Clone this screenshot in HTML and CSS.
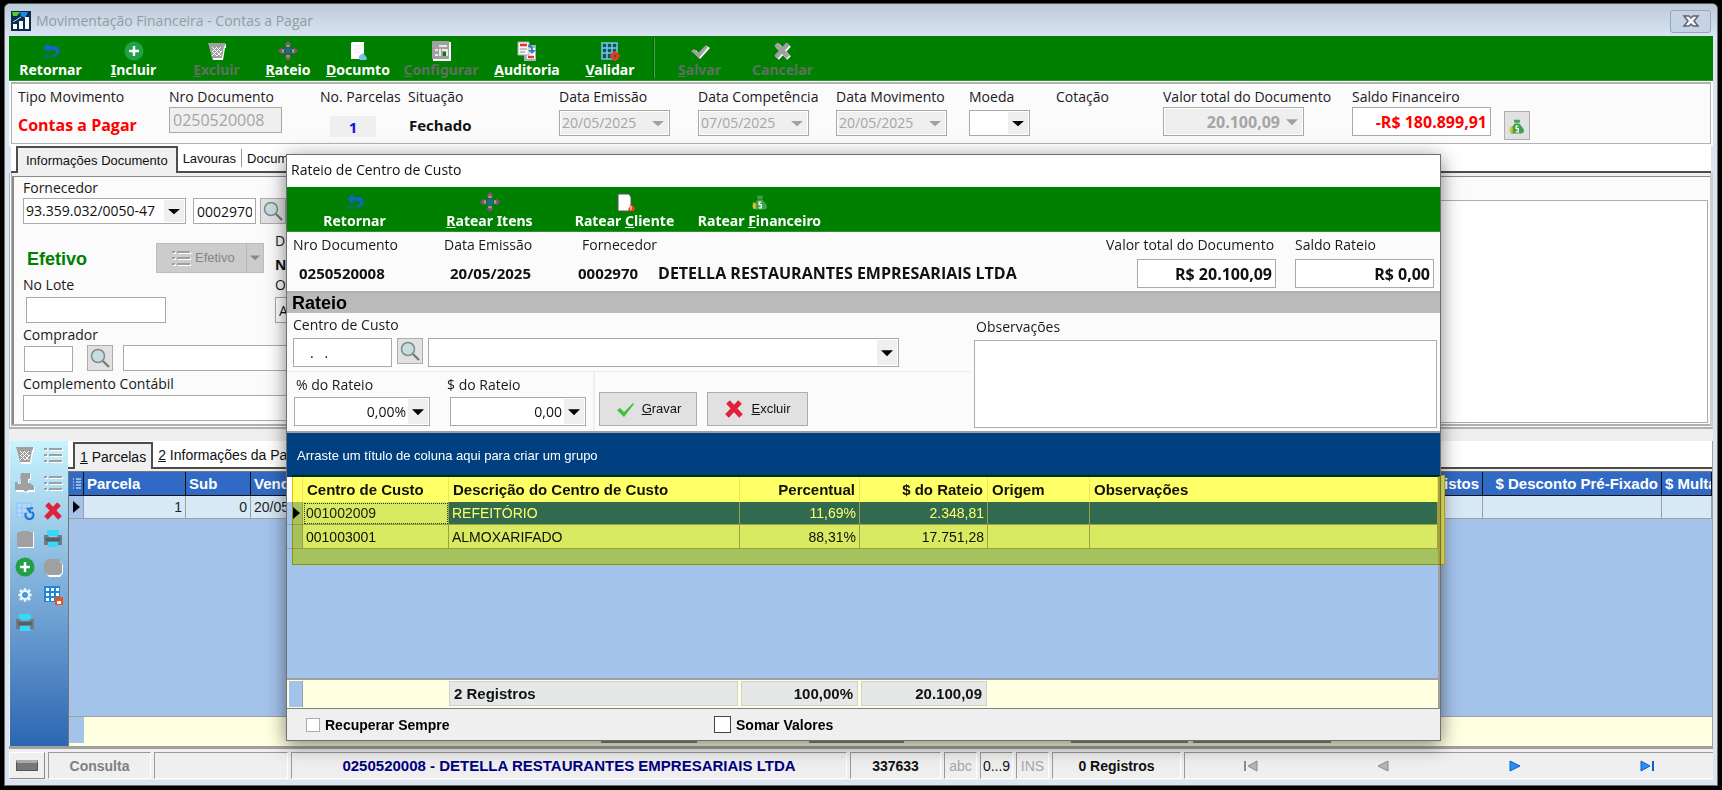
FILE: index.html
```html
<!DOCTYPE html>
<html lang="pt-BR">
<head>
<meta charset="utf-8">
<title>Movimentação Financeira - Contas a Pagar</title>
<link rel="stylesheet" href="styles.css">
</head>
<body>
<svg class="defs" aria-hidden="true">
  <symbol id="i-back" viewBox="0 0 20 20"><path d="M2 7 8 2v3h5a5 5 0 0 1 1 10l-1 1v-3a2 2 0 0 0 0-4H8v3z" fill="#1565c0"/><path d="M3 13v4M6 13v4M9 13v4M12 13v4" stroke="#1565c0" stroke-width="1"/></symbol>
  <symbol id="i-plus" viewBox="0 0 20 20"><circle cx="10" cy="10" r="9.500" fill="#21a045"/><path d="M10 5v10M5 10h10" stroke="#fff" stroke-width="2.500"/></symbol>
  <symbol id="i-trash" viewBox="0 0 20 20"><path d="M2 3h17v4h-1l-2 12H6L3 7z" fill="#fff"/><path d="M1 2h17v3h-1l-2 12H5L2 5z" fill="#a0a0a0"/><path d="M5 6l9 9M9 6l5 5M5 10l5 5M14 6l-9 9M10 6l-5 5M15 10l-5 5" stroke="#fff" stroke-width="1"/></symbol>
  <symbol id="i-move" viewBox="0 0 20 20"><path d="M10 0l3.500 4H11v2H9V4H6.500zM10 20l3.500-4H11v-2H9v2H6.500zM0 10l4-3.500V9h2v2H4v2.500zM20 10l-4-3.500V9h-2v2h2v2.500z" fill="#9c4b86"/><path d="M8 5h4M8 15h4M5 8v4M15 8v4" stroke="#d5c9d2"/><path d="M7.500 7.500h5v5h-5z" fill="#1c7a4a" stroke="#3f51a5" stroke-width="1.500"/></symbol>
  <symbol id="i-doc" viewBox="0 0 20 20"><path d="M4 1h12v13l-3 4H3V2z" fill="#fff"/><path d="M6 5h7M6 8h7M6 11h6" stroke="#e3e6ea"/><path d="M11 18v-3l4-3 4 5-1 2h-6z" fill="#7cc0ec"/></symbol>
  <symbol id="i-doc-red" viewBox="0 0 20 20"><path d="M3 2h11l2 3v14H3z" fill="#fff" stroke="#555"/><path d="M13 18l3-6 4 4-1 3h-5z" fill="#f04020"/><path d="M16 14v4" stroke="#fff"/></symbol>
  <symbol id="i-config" viewBox="0 0 20 20"><path d="M2 1h18v19H2z" fill="#fff"/><path d="M1 0h17v18H1z" fill="#a0a0a0"/><path d="M4 9h3M4 14h3M8 5h8" stroke="#fff" stroke-width="1.500"/><path d="M9 8v7M11 9h5v6" fill="none" stroke="#fff" stroke-width="1.500"/><path d="M12 11h3v4h-3z" fill="#008000"/></symbol>
  <symbol id="i-audit" viewBox="0 0 20 20"><path d="M7 4h12v16H7z" fill="#aab3bd"/><path d="M10 7h8v11h-8z" fill="#fff"/><path d="M1 1h11v13H1z" fill="#f5f5f5" stroke="#b8a8a8"/><path d="M3 4h7M11 16h6" stroke="#e03535" stroke-width="2.500"/><path d="M3 8h7M3 11h5" stroke="#8a9096"/><path d="M11 4c5 0 5 2 5 5h3l-4 4-4-4h3c0-2-1-3-3-3z" fill="#2d82c8"/></symbol>
  <symbol id="i-tablegear" viewBox="0 0 20 20"><path d="M2 2h15v16H2zM7 2v16M12 2v16M2 7h15M2 12h15" fill="#0a5a50" stroke="#7cc4f0" stroke-width="1.500"/><circle cx="15" cy="15" r="2.500" fill="none" stroke="#e03a20" stroke-width="3"/><path d="M15 10v3M15 17v3M10 15h3M17 15h3M12 12l1 1M17 17l1 1M18 12l-1 1M13 17l-1 1" stroke="#e03a20" stroke-width="2"/></symbol>
  <symbol id="i-check-off" viewBox="0 0 20 20"><path d="M3 11l3-2 3 4 8-8 3 2L10 18z" fill="#fff"/><path d="M1 10l3-2 4 4 8-8 2 2L9 17z" fill="#a0a0a0"/></symbol>
  <symbol id="i-x-off" viewBox="0 0 20 20"><path d="M4 4l12 13M16 4L4 17" stroke="#fff" stroke-width="5"/><path d="M3 3l12 13M15 3L3 16" stroke="#a0a0a0" stroke-width="4.500"/></symbol>
  <symbol id="i-bag" viewBox="-2 -2 24 24"><path d="M6 2l2 1 2-1 2 1 2-1-1 4H7zM7 7h6l5 7c1 3 0 5-3 5H5c-3 0-4-2-2-6z" fill="#45a049"/><path d="M2 10l3 2v6H2l-1-3z" fill="#d8c22c"/><path d="M11.500 10H9v3h2.500v4H8.500" fill="none" stroke="#fff" stroke-width="1.500"/></symbol>
  <symbol id="i-search" viewBox="0 0 20 20"><circle cx="8" cy="8" r="6.500" fill="#c9dde0" stroke="#7d8b8e" stroke-width="1.500"/><path d="M13 13l6 6" stroke="#777" stroke-width="2.200"/></symbol>
  <symbol id="i-list" viewBox="0 0 20 20"><path d="M2 5h3M7 5h13M2 11h3M7 11h13M2 17h3M7 17h13" stroke="#fff" stroke-width="2"/><path d="M1 4h3M6 4h13M1 10h3M6 10h13M1 16h3M6 16h13" stroke="#a0a0a0" stroke-width="2"/></symbol>
  <symbol id="i-check" viewBox="0 0 20 20"><path d="M2 11l3-2 4 4 9-9 1 1L9 18z" fill="#3ec23a"/></symbol>
  <symbol id="i-x" viewBox="0 0 20 20"><path d="M4 3l13 14M16 3L3 17" stroke="#e0213a" stroke-width="5"/></symbol>
  <symbol id="i-valve" viewBox="0 0 20 20"><path d="M7 1h9v6h-2v4h2l4 3v5h-6l-2 1-3-1H1V9h3v3h3V7H6z" fill="#fff"/><path d="M6 0h9v6h-2v4h2l4 3v4h-6l-2 2-3-2H0V9h3v2h3V6H5z" fill="#a0a0a0"/></symbol>
  <symbol id="i-tablerefresh" viewBox="0 0 20 20"><path d="M2 2h14v14H2zM7 2v14M12 2v14M2 7h14M2 12h14" fill="#b7d9fb" stroke="#8cc0f5"/><path d="M11 12a4 4 0 1 0 6-1M18 7l-5 1 3 4" fill="none" stroke="#1b76d2" stroke-width="2.200"/></symbol>
  <symbol id="i-square" viewBox="0 0 20 20"><path d="M3 3h16v16H3z" fill="#fff"/><path d="M2 3h4V2h8v1h4v15H2z" fill="#a0a0a0"/></symbol>
  <symbol id="i-printer" viewBox="0 0 20 20"><path d="M4 1h12v6H4z" fill="#38d7f5"/><path d="M1 6h4l1 2h8l1-2h4v10H1z" fill="#6f7c86"/><path d="M3 9h14v3H3z" fill="#53606a"/><path d="M5 13h10v5H5z" fill="#38d7f5"/></symbol>
  <symbol id="i-stack" viewBox="0 0 20 20"><path d="M6 4h11l3 4v8l-3 4H6l-4-5V7z" fill="#fff"/><path d="M5 2h10l4 5v9l-3 2H5l-4-3V6z" fill="#a0a0a0"/></symbol>
  <symbol id="i-gear" viewBox="-2 -2 24 24"><path d="M10 2v16M2 10h16M4 4l12 12M16 4L4 16" stroke="#e9f6ff" stroke-width="3"/><circle cx="10" cy="10" r="6" fill="#e9f6ff"/><circle cx="10" cy="10" r="3" fill="#4aa0e0" stroke="#2c7cc0"/></symbol>
  <symbol id="i-tablesave" viewBox="0 0 20 20"><path d="M1 1h16v16H1z" fill="#1e88d8"/><path d="M3 3h3v3H3zM8 3h3v3H8zM13 3h3v3h-3zM3 8h3v3H3zM8 8h3v3H8zM13 8h3v3h-3zM3 13h3v3H3zM8 13h3v3H8z" fill="#fff"/><path d="M12 12h8v8h-8z" fill="#f0501e"/><path d="M14 16h4v3h-4z" fill="#fff"/></symbol>
  <symbol id="i-logo" viewBox="0 0 20 20"><path d="M0 0h20v20H0z" fill="#0b2c4e"/><path d="M1 1h8l-3 4H2z" fill="#4bd02c"/><path d="M9 1h8l-3 6-4-2z" fill="#1a8be0"/><path d="M2 18h4v-5H2zM8 18h4v-8H8zM14 18h4V6h-4z" fill="#fff"/><path d="M2 11l8-5" stroke="#bfe0f5"/></symbol>
  <symbol id="i-close" viewBox="0 0 20 20"><path d="M3 5h5l2 2 2-2h5l-4 5 4 5h-5l-2-2-2 2H3l4-5z" fill="#f4f6f8" stroke="#5b6474" stroke-width="1.500"/></symbol>
  <symbol id="i-first" viewBox="0 0 20 20"><path d="M4 5v10" stroke="#8d8d8d" stroke-width="2"/><path d="M16 5v10L7 10z" fill="#b5b5b5" stroke="#8d8d8d"/></symbol>
  <symbol id="i-prev" viewBox="0 0 20 20"><path d="M15 5v10L5 10z" fill="#b5b5b5" stroke="#8d8d8d"/></symbol>
  <symbol id="i-next" viewBox="0 0 20 20"><path d="M5 5v10l10-5z" fill="#2b8df5" stroke="#0a62c8"/></symbol>
  <symbol id="i-last" viewBox="0 0 20 20"><path d="M4 5v10l9-5z" fill="#2b8df5" stroke="#0a62c8"/><path d="M16 5v10" stroke="#0a62c8" stroke-width="2"/></symbol>
</svg>

<main class="window">
  <header class="titlebar">
    <svg class="icon"><use href="#i-logo"/></svg>
    <h1 class="titlebar-text">Movimentação Financeira - Contas a Pagar</h1>
    <button class="close" aria-label="Fechar"><svg class="icon"><use href="#i-close"/></svg></button>
  </header>

  <nav class="toolbar">
    <button class="tool w-m"><svg class="icon"><use href="#i-back"/></svg><span>Retornar</span></button>
    <button class="tool w-m"><svg class="icon"><use href="#i-plus"/></svg><span><u>I</u>ncluir</span></button>
    <button class="tool w-m" disabled><svg class="icon"><use href="#i-trash"/></svg><span><u>E</u>xcluir</span></button>
    <button class="tool w-s"><svg class="icon"><use href="#i-move"/></svg><span><u>R</u>ateio</span></button>
    <button class="tool w-n"><svg class="icon"><use href="#i-doc"/></svg><span><u>D</u>ocumto</span></button>
    <button class="tool w-l" disabled><svg class="icon"><use href="#i-config"/></svg><span><u>C</u>onfigurar</span></button>
    <button class="tool w-l"><svg class="icon"><use href="#i-audit"/></svg><span><u>A</u>uditoria</span></button>
    <button class="tool w-n"><svg class="icon"><use href="#i-tablegear"/></svg><span><u>V</u>alidar</span></button>
    <i class="tool-sep"></i>
    <button class="tool w-m" disabled><svg class="icon"><use href="#i-check-off"/></svg><span><u>S</u>alvar</span></button>
    <button class="tool w-m" disabled><svg class="icon"><use href="#i-x-off"/></svg><span>Cancelar</span></button>
  </nav>

  <section class="summary">
    <div class="col"><span class="lbl">Tipo Movimento</span><strong class="strong red">Contas a Pagar</strong></div>
    <div class="col"><label class="lbl" for="nro">Nro Documento</label><input class="box off doc-no" id="nro" value="0250520008" disabled></div>
    <div class="col"><span class="lbl">No. Parcelas</span><output class="count">1</output></div>
    <div class="col"><span class="lbl">Situação</span><strong class="strong">Fechado</strong></div>
    <div class="col"><label class="lbl" for="de">Data Emissão</label><span class="combo off date"><select id="de" disabled><option>20/05/2025</option></select></span></div>
    <div class="col"><label class="lbl" for="dc">Data Competência</label><span class="combo off date"><select id="dc" disabled><option>07/05/2025</option></select></span></div>
    <div class="col"><label class="lbl" for="dm">Data Movimento</label><span class="combo off date"><select id="dm" disabled><option>20/05/2025</option></select></span></div>
    <div class="col"><label class="lbl" for="moeda">Moeda</label><span class="combo coin"><select id="moeda"><option></option></select></span></div>
    <div class="col"><span class="lbl">Cotação</span></div>
    <div class="col"><label class="lbl" for="vt">Valor total do Documento</label><span class="combo off total"><select id="vt" disabled><option>20.100,09</option></select></span></div>
    <div class="col"><label class="lbl" for="sf">Saldo Financeiro</label><input class="box money red" id="sf" value="-R$ 180.899,91"></div>
    <div class="col col-bag"><button class="sq" aria-label="Financeiro"><svg class="icon"><use href="#i-bag"/></svg></button></div>
  </section>

  <nav class="tabs tabs-top">
    <button class="tab on">Informações Documento</button><button class="tab">Lavouras</button><i class="tab-sep"></i><button class="tab">Docum</button>
  </nav>

  <section class="docform">
    <div class="supplier">
      <label class="lbl" for="cnpj">Fornecedor</label>
      <div class="row supplier-id">
        <span class="combo cnpj"><select id="cnpj"><option>93.359.032/0050-47</option></select></span>
        <input class="box code" aria-label="Código do fornecedor" value="0002970">
        <button class="sq" aria-label="Buscar fornecedor"><svg class="icon"><use href="#i-search"/></svg></button>
      </div>
      <div class="row status-row">
        <strong class="efetivo">Efetivo</strong>
        <button class="split" disabled><svg class="icon"><use href="#i-list"/></svg><span>Efetivo</span><i class="split-arrow"></i></button>
        <div class="kind"><span class="lbl">D</span><strong>N</strong></div>
      </div>
      <div class="row lot">
        <div class="lot-col"><label class="lbl" for="lote">No Lote</label><input class="box lote" id="lote"></div>
        <div class="lot-org"><label class="lbl" for="org">O</label><input class="box" id="org" value="A"></div>
      </div>
      <label class="lbl lbl-buyer" for="comp">Comprador</label>
      <div class="row buyer">
        <input class="box buyer-code" id="comp">
        <button class="sq" aria-label="Buscar comprador"><svg class="icon"><use href="#i-search"/></svg></button>
        <input class="box grow" aria-label="Nome do comprador">
      </div>
      <label class="lbl lbl-note" for="cc">Complemento Contábil</label>
      <input class="box wide" id="cc">
    </div>
    <textarea class="memo" aria-label="Histórico"></textarea>
  </section>

  <section class="lower">
    <nav class="side">
      <button aria-label="Lixeira"><svg class="icon"><use href="#i-trash"/></svg></button>
      <button aria-label="Lista"><svg class="icon"><use href="#i-list"/></svg></button>
      <button aria-label="Baixa"><svg class="icon"><use href="#i-valve"/></svg></button>
      <button aria-label="Itens"><svg class="icon"><use href="#i-list"/></svg></button>
      <button aria-label="Atualizar"><svg class="icon"><use href="#i-tablerefresh"/></svg></button>
      <button aria-label="Remover"><svg class="icon"><use href="#i-x"/></svg></button>
      <button aria-label="Anexo"><svg class="icon"><use href="#i-square"/></svg></button>
      <button aria-label="Imprimir"><svg class="icon"><use href="#i-printer"/></svg></button>
      <button aria-label="Adicionar"><svg class="icon"><use href="#i-plus"/></svg></button>
      <button aria-label="Moedas"><svg class="icon"><use href="#i-stack"/></svg></button>
      <button aria-label="Opções"><svg class="icon"><use href="#i-gear"/></svg></button>
      <button aria-label="Salvar grade"><svg class="icon"><use href="#i-tablesave"/></svg></button>
      <button aria-label="Imprimir grade"><svg class="icon"><use href="#i-printer"/></svg></button>
    </nav>
    <div class="parcels">
      <nav class="tabs">
        <button class="tab on"><u>1</u> Parcelas</button><button class="tab"><u>2</u> Informações da Parc</button>
      </nav>
      <div class="pgrid">
        <table class="ptable">
          <colgroup><col class="p-ind"><col class="p-parc"><col class="p-sub"><col class="p-venc"><col><col class="p-desc"><col class="p-multa"></colgroup>
          <thead><tr><th><svg class="mini" viewBox="0 0 10 12"><path d="M1 1h1M4 1h5M1 4h1M4 4h5M1 7h1M4 7h5M1 10h1M4 10h5" stroke="#fff"/></svg></th><th>Parcela</th><th>Sub</th><th>Venc</th><th class="r">Previstos</th><th class="r">$ Desconto Pré-Fixado</th><th>$ Multa</th></tr></thead>
          <tbody><tr><td class="ind"><i class="caret"></i></td><td class="r">1</td><td class="r">0</td><td>20/05</td><td></td><td></td><td></td></tr></tbody>
        </table>
        <div class="pfoot"><i class="pfoot-ind"></i><i class="sum s1"></i><i class="sum s2"></i><i class="sum s3"></i><i class="sum s4"></i></div>
      </div>
    </div>
  </section>

  <footer class="statusbar">
    <div class="st st-key"><i class="key"></i></div>
    <div class="st st-mode">Consulta</div>
    <div class="st st-blank"></div>
    <div class="st st-name">0250520008 - DETELLA RESTAURANTES EMPRESARIAIS LTDA</div>
    <div class="st st-id">337633</div>
    <div class="st st-s dim">abc</div>
    <div class="st st-s plain">0...9</div>
    <div class="st st-s dim">INS</div>
    <div class="st st-reg">0 Registros</div>
    <div class="st st-nav">
      <button aria-label="Primeiro"><svg class="icon"><use href="#i-first"/></svg></button>
      <button aria-label="Anterior"><svg class="icon"><use href="#i-prev"/></svg></button>
      <button aria-label="Próximo"><svg class="icon"><use href="#i-next"/></svg></button>
      <button aria-label="Último"><svg class="icon"><use href="#i-last"/></svg></button>
    </div>
  </footer>
</main>

<section class="dialog" role="dialog" aria-label="Rateio de Centro de Custo">
  <h2 class="dialog-title">Rateio de Centro de Custo</h2>
  <nav class="toolbar">
    <button class="tool w-d"><svg class="icon"><use href="#i-back"/></svg><span>Retornar</span></button>
    <button class="tool w-d"><svg class="icon"><use href="#i-move"/></svg><span><u>R</u>atear Itens</span></button>
    <button class="tool w-d"><svg class="icon"><use href="#i-doc-red"/></svg><span>Ratear <u>C</u>liente</span></button>
    <button class="tool w-d"><svg class="icon"><use href="#i-bag"/></svg><span>Ratear <u>F</u>inanceiro</span></button>
  </nav>
  <div class="dinfo">
    <div class="d-nro"><span class="lbl">Nro Documento</span><strong>0250520008</strong></div>
    <div class="d-data"><span class="lbl">Data Emissão</span><strong>20/05/2025</strong></div>
    <div class="d-forn"><span class="lbl">Fornecedor</span><div class="d-names"><strong>0002970</strong><strong>DETELLA RESTAURANTES EMPRESARIAIS LTDA</strong></div></div>
    <div class="d-val"><label class="lbl" for="dv">Valor total do Documento</label><input class="box money" id="dv" value="R$ 20.100,09"></div>
    <div class="d-sal"><label class="lbl" for="ds">Saldo Rateio</label><input class="box money" id="ds" value="R$ 0,00"></div>
  </div>
  <h3 class="bar">Rateio</h3>
  <div class="dform">
    <div class="dleft">
      <div class="centro">
        <label class="lbl" for="cec">Centro de Custo</label>
        <div class="row">
          <input class="box cec" id="cec" value="   .   .">
          <button class="sq" aria-label="Buscar centro de custo"><svg class="icon"><use href="#i-search"/></svg></button>
          <span class="combo cname"><select aria-label="Descrição do centro de custo"><option></option></select></span>
        </div>
      </div>
      <div class="split-row">
        <div class="amounts">
          <div><label class="lbl" for="pr">% do Rateio</label><span class="combo amt"><select id="pr"><option>0,00%</option></select></span></div>
          <div><label class="lbl" for="vr">$ do Rateio</label><span class="combo amt"><select id="vr"><option>0,00</option></select></span></div>
        </div>
        <button class="btn btn-a"><svg class="icon"><use href="#i-check"/></svg><span><u>G</u>ravar</span></button>
        <button class="btn btn-b"><svg class="icon"><use href="#i-x"/></svg><span><u>E</u>xcluir</span></button>
      </div>
    </div>
    <div class="dright">
      <label class="lbl" for="obs">Observações</label>
      <textarea class="obs" id="obs"></textarea>
    </div>
  </div>
  <div class="group-hint">Arraste um título de coluna aqui para criar um grupo</div>
  <div class="cgrid">
    <table class="ctable">
      <colgroup><col class="c-ind"><col class="c-cod"><col class="c-desc"><col class="c-pct"><col class="c-val"><col class="c-ori"><col></colgroup>
      <thead><tr><th></th><th>Centro de Custo</th><th>Descrição do Centro de Custo</th><th class="r">Percentual</th><th class="r">$ do Rateio</th><th>Origem</th><th>Observações</th></tr></thead>
      <tbody>
        <tr class="sel"><td class="ind"><i class="caret"></i></td><td class="focus">001002009</td><td>REFEITÓRIO</td><td class="r">11,69%</td><td class="r">2.348,81</td><td></td><td></td></tr>
        <tr><td class="ind"></td><td>001003001</td><td>ALMOXARIFADO</td><td class="r">88,31%</td><td class="r">17.751,28</td><td></td><td></td></tr>
      </tbody>
    </table>
    <div class="marker"></div>
  </div>
  <div class="cfoot"><i class="cf-ind"></i><span class="cf cf-n">2 Registros</span><span class="cf cf-p">100,00%</span><span class="cf cf-v">20.100,09</span></div>
  <div class="checks">
    <label class="chk"><input type="checkbox">Recuperar Sempre</label>
    <label class="chk chk-big"><input type="checkbox">Somar Valores</label>
  </div>
</section>
</body>
</html>
```
FILE: styles.css
```css
* { box-sizing: border-box; }
body {
  margin: 0; height: 100vh; min-height: 700px; padding: 3px 4px 4px; background: #000; position: relative; overflow: hidden;
  font: 14px/20px "Open Sans", "Noto Sans", sans-serif; color: #111;
}
button, input, select, textarea { font: inherit; color: inherit; margin: 0; padding: 0; border: 0; border-radius: 0; background: none; outline: none; }
h1, h2, h3 { margin: 0; font-weight: 400; font-size: 14px; }
.defs { position: absolute; width: 0; height: 0; }
.icon { width: 20px; height: 20px; flex: none; display: block; }
.row { display: flex; }
.grow { flex: 1; }
.r { text-align: right; }

.window {
  height: 100%; display: flex; flex-direction: column; padding: 0 4px 5px;
  background: #dbe5f2; border: 1px solid #6d6d6d; border-top-color: #555; border-radius: 6px 6px 0 0;
}
.titlebar { flex: none; display: flex; align-items: center; height: 32px; gap: 5px; background: linear-gradient(#bccad8, #d8e4f1); margin: 0 -4px; padding: 2px 6px 0; border-radius: 5px 5px 0 0; }
.titlebar-text { flex: 1; color: #969ba1; }
.close { width: 41px; height: 23px; display: grid; place-items: center; border: 1px solid #98a5bd; border-radius: 3px; background: #c6d3e3; }

.toolbar { flex: none; display: flex; height: 45px; background: #008000; border-bottom: 1px solid #2d932d; position: relative; z-index: 1; }
.tool { display: flex; flex-direction: column; align-items: center; padding-top: 5px; color: #fff; font: bold 14px/18px "Noto Sans", sans-serif; white-space: nowrap; }
.tool:disabled { color: #5f7060; }
.w-s { width: 60px; } .w-n { width: 80px; } .w-m { width: 83px; } .w-l { width: 86px; } .w-d { width: 135px; }
.tool-sep { width: 2px; margin: 2px 3px; background: #005c00; border-right: 1px solid #4fa04f; }

.lbl { display: block; white-space: nowrap; line-height: 20px; color: #1a1a1a; }
.box { display: block; height: 26px; border: 1px solid #a9a9a9; background: #fff; padding: 0 3px; min-width: 0; }
.off, .off select { background: #efefef; color: #a5a5a5; opacity: 1; }
.combo { display: block; position: relative; height: 26px; border: 1px solid #a9a9a9; background: #fff; padding: 1px; }
.combo select { display: block; width: 100%; height: 100%; padding: 0 22px 0 1px; appearance: none; }
.combo::after { content: ""; position: absolute; top: 2px; right: 1px; bottom: 2px; width: 20px; background: #000; clip-path: polygon(20% 40%, 80% 40%, 50% 66%); pointer-events: none; }
.combo.off::after { background: #a0a0a0; }
.combo::before { content: ""; position: absolute; top: 1px; right: 1px; bottom: 1px; width: 20px; background: #efefef; pointer-events: none; }
.sq { width: 26px; height: 26px; display: grid; place-items: center; background: #e1e1e1; border: 1px solid #adadad; flex: none; }
.money { font-weight: 700; font-size: 16px; text-align: right; height: 29px; width: 139px; }
.red { color: #f00; }

.summary {
  flex: none; display: grid; grid-template-columns: 151px 151px 88px 151px 139px 138px 133px 87px 107px 189px 152px auto; justify-content: start;
  height: 62px; margin: 1px 2px 0; padding: 3px 0 0 6px; background: #fbfbfb; border: 1px solid #b4b4b4; border-top-width: 2px; box-shadow: 0 0 0 2px #fbfbfb;
}
.strong { display: block; padding: 8px 0 0 1px; font-size: 15px; line-height: 20px; }
.strong.red { padding-left: 0; font-size: 16px; }
.doc-no { width: 113px; font-size: 16px; }
.count { display: grid; place-items: center; width: 46px; height: 21px; margin: 9px 0 0 10px; background: #efefef; color: #1515e0; font-weight: 700; font-size: 15px; }
.date { width: 111px; margin-top: 3px; }
.coin { width: 61px; margin-top: 3px; }
.total { width: 141px; height: 29px; font-weight: 700; font-size: 16px; }
.total select { text-align-last: right; }
.col-bag { padding-top: 24px; }
.col-bag .sq { height: 29px; }

.tabs { flex: none; display: flex; align-items: flex-end; height: 29px; padding-left: 5px; background: #fff; border-bottom: 2px solid #4d4d4d; font: 14px/18px "Liberation Sans", Arial, sans-serif; }
.tab { height: 25px; padding: 0 5px; font: inherit; white-space: nowrap; }
.tab.on { padding: 0 5px; background: #f0f0f0; border: 2px solid #4d4d4d; border-bottom: 0; margin-bottom: -2px; height: 27px; }
.tab-sep { height: 18px; width: 1px; background: #999; margin-bottom: 4px; }
.tabs-top { margin: 0 2px; font-size: 13px; }
.tabs-top .tab.on { padding: 0 8px; }

.docform { flex: none; display: flex; min-height: 256px; padding: 5px 2px 1px 11px; background: #fbfbfb; border-left: 3px double #b0b0b0; border-right: 3px solid #cfcfcf; border-bottom: 5px double #b0b0b0; box-shadow: inset 0 3px #f0f0f0, inset 2px 4px #8a8a8a; }
.supplier { width: 700px; }
.supplier-id { gap: 7px; }
.cnpj { width: 163px; }
.code { width: 63px; }
.supplier .code + .sq { margin-left: -3px; }
.status-row { margin-top: 7px; height: 42px; }
.efetivo { width: 133px; padding: 16px 0 0 4px; color: #008000; font: bold 18px/24px "Liberation Sans", Arial, sans-serif; }
.split { display: flex; flex: none; align-items: center; gap: 4px; width: 108px; height: 30px; margin-top: 12px; padding-left: 14px; background: #ccc; border: 1px solid #bdbdbd; color: #858585; font: 13px/18px "Liberation Sans", Arial, sans-serif; }
.split-arrow { flex: none; margin-left: auto; width: 17px; height: 28px; border-left: 1px solid #b5b5b5; position: relative; }
.split-arrow::after { content: ""; position: absolute; inset: 10px 3px 11px 3px; background: #888; clip-path: polygon(0 20%, 100% 20%, 50% 90%); }
.kind { margin-left: 11px; }
.kind .lbl { margin: 0 0 4px; }
.kind strong { display: block; }
.lot-col { width: 252px; padding-top: 2px; }
.lote { width: 140px; margin: 2px 0 0 3px; }
.lot-org { padding-top: 2px; flex: 1; }
.lot-org .box { width: 160px; margin-top: 2px; }
.lbl-buyer { margin-top: 2px; }
.buyer-code { width: 49px; margin: 1px 14px 0 1px; }
.buyer .grow { margin-left: 10px; }
.lbl-note { margin-top: 2px; }
.wide { width: 100%; margin-top: 1px; }
.memo { flex: 1; margin: 22px 0 0 12px; border: 1px solid #adadad; background: #fff; resize: none; }

.lower { flex: 1; min-height: 0; display: flex; background: #efefef; padding-top: 12px; border-bottom: 3px solid #a0a0a0; }
.side { flex: none; width: 59px; display: grid; grid-template-columns: 28px 28px; grid-auto-rows: 28px; align-content: start; padding: 0 0 0 1px; background: linear-gradient(#c8f4fe, #83b3dc 45%, #2c66b2); border-left: 1px solid #efefef; }
.side button { display: grid; place-items: center; }
.parcels { flex: 1; min-width: 0; display: flex; flex-direction: column; background: #efefef; border-right: 1px solid #a0a0a0; }
.parcels .tabs { height: 28px; }
.pgrid { flex: 1; margin-top: 2px; display: flex; flex-direction: column; justify-content: space-between; background: #a4c3eb; border: 1px solid #777; border-right: 0; border-bottom: 0; }
table { border-collapse: separate; border-spacing: 0; table-layout: fixed; width: 100%; font: 14px/18px "Liberation Sans", Arial, sans-serif; }
th, td { padding: 0 4px; text-align: left; overflow: hidden; white-space: nowrap; border-right: 1px solid #a0a0a0; border-bottom: 1px solid #a0a0a0; height: 23px; }
th { font-weight: 700; font-size: 15px; }
th.r, td.r { text-align: right; }
.ptable th { background: #316ac5; color: #fff; border-color: #111; padding: 0 3px; height: 24px; }
.ptable td { background: #d7e9f5; padding: 0 3px; color: #222; }
.mini { width: 10px; height: 12px; display: block; }
.p-ind { width: 15px; } .p-parc { width: 102px; } .p-sub { width: 65px; } .p-venc { width: 90px; } .p-desc { width: 179px; } .p-multa { width: 50px; }
td.ind, .ptable td.ind { background: #a4c3eb; padding: 0 0 0 4px; }
.caret { display: block; width: 7px; height: 12px; background: #000; clip-path: polygon(0 0, 100% 50%, 0 100%); }
.pfoot { display: flex; height: 30px; background: #ffffe1; border-top: 1px solid #a0a0a0; padding-bottom: 3px; }
.pfoot-ind { width: 15px; background: #a4c3eb; margin-right: 517px; }
.sum { border-bottom: 2px solid #8a8a80; background: #e8e8e8; margin-top: 2px; }
.s1 { width: 96px; } .s2 { width: 95px; margin-left: 112px; } .s3 { width: 117px; margin-left: 167px; } .s4 { width: 138px; margin-left: 5px; }

.statusbar { flex: none; display: flex; gap: 3px; height: 31px; padding: 3px 0 1px; background: #efefef; font: bold 14px/18px "Liberation Sans", Arial, sans-serif; }
.st { display: grid; place-items: center; border: 1px solid #9a9a9a; border-right-color: #fff; border-bottom-color: #fff; white-space: nowrap; }
.st-key { width: 36px; border-color: #fff #8a8a8a #8a8a8a #fff; }
.key { width: 22px; height: 11px; background: #777; border: 1px solid #555; border-top: 3px solid #aaa; }
.st-mode { width: 103px; color: #808080; }
.st-blank { width: 134px; }
.st-name { width: 556px; color: #000080; font-size: 15px; }
.st-id { width: 91px; }
.st-s { width: 33px; font-weight: 400; }
.dim { color: #a8a8a8; }
.st-reg { width: 129px; }
.st-nav { flex: 1; grid-template-columns: repeat(4, 1fr); border-right: 0; }

.dialog { position: absolute; z-index: 2; top: 154px; left: 286px; right: 281px; background: #fbfbfb; border: 1px solid #707070; box-shadow: 0 4px 18px rgba(0, 0, 0, .5); }
.dialog-title { height: 32px; padding: 5px 0 0 4px; background: #fff; line-height: 20px; }
.dinfo { display: flex; height: 59px; padding: 3px 6px 0; }
.dinfo strong { display: block; margin-top: 8px; line-height: 20px; font-size: 15px; white-space: nowrap; }
.d-nro { width: 151px; } .d-nro strong, .d-data strong { padding-left: 6px; }
.d-data { width: 138px; }
.d-forn { flex: 1; }
.d-names { display: flex; gap: 20px; margin-left: -4px; }
.d-names strong:last-child { font-size: 16px; }
.d-val { width: 189px; }
.d-val .box { margin: 4px 0 0 31px; } .d-sal .box { margin-top: 4px; }
.d-sal { width: 139px; }
.bar { height: 22px; padding-left: 5px; background: #bababa; border-top: 2px solid #abb0b0; font: bold 18px/20px "Liberation Sans", Arial, sans-serif; color: #000; }
.dform { display: flex; height: 120px; border-bottom: 2px solid #a0a0a0; }
.dleft { width: 684px; }
.centro { padding: 2px 0 0 6px; height: 59px; border-bottom: 1px solid #ececec; }
.centro .row { gap: 5px; margin-top: 3px; }
.cec { width: 99px; height: 29px; white-space: pre; padding-left: 5px; }
.cname { width: 471px; height: 29px; }
.split-row { display: flex; }
.amounts { display: flex; gap: 20px; width: 308px; height: 59px; padding: 3px 0 0 7px; border-right: 2px solid #efefef; }
.amt { width: 136px; height: 29px; margin-top: 2px; }
.amounts .lbl { padding-left: 2px; }
.amounts div + div .lbl { padding-left: 0; margin-left: -3px; }
.amt select { text-align-last: right; }
.btn { display: flex; align-items: center; justify-content: center; gap: 7px; height: 34px; margin: 20px 0 0 4px; background: #e1e1e1; border: 1px solid #adadad; font: 13px/18px "Liberation Sans", Arial, sans-serif; }
.btn-a { width: 98px; } .btn-b { width: 101px; margin-left: 10px; }
.dright { flex: 1; display: flex; flex-direction: column; padding: 4px 3px 3px; }
.dright .lbl { padding-left: 2px; }
.obs { flex: 1; margin-top: 3px; border: 1px solid #adadad; background: #fff; resize: none; }
.group-hint { height: 43px; padding: 14px 10px 0; background: #004080; color: #fff; font: 13px/18px "Liberation Sans", Arial, sans-serif; }
.cgrid { position: relative; min-height: 204px; background: #a4c3eb; border-right: 2px solid #a0a0a0; border-top: 1px solid #003060; border-bottom: 2px solid #a0a0a0; }
.ctable th { background: #fff; border-color: #e8e8e8; border-bottom: 0; height: 25px; }
.ctable td { background: #d8e9f5; padding: 0 3px; height: 24px; }
.ctable .sel td { background: #316ac5; color: #fff; height: 23px; }
.ctable td.ind, .ctable .sel td.ind { background: #a4c3eb; padding-left: 6px; }
.ctable .sel td.focus { background: #d8e9f5; color: #222; outline: 1px dotted #333; outline-offset: -2px; }
.c-ind { width: 16px; } .c-cod { width: 146px; } .c-desc { width: 291px; } .c-pct { width: 120px; } .c-val { width: 128px; } .c-ori { width: 102px; }
.marker { position: absolute; top: -2px; left: 5px; right: -7px; height: 90px; background: #ffff66; border: 1px solid #e0c000; mix-blend-mode: multiply; pointer-events: none; }
.cfoot { display: flex; height: 29px; padding-bottom: 1px; background: #ffffe1; border-bottom: 1px solid #808080; border-right: 2px solid #a0a0a0; font: bold 15px/22px "Liberation Sans", Arial, sans-serif; }
.cf-ind { width: 13px; margin: 1px 147px 0 2px; background: #a4c3eb; box-shadow: 1px 0 #a0a0a0; }
.cf { height: 25px; margin: 1px 3px 0 0; padding: 0 4px; background: #e6e8e8; border: 1px solid #d0d0d0; line-height: 23px; }
.cf-n { width: 289px; } .cf-p { width: 117px; text-align: right; } .cf-v { width: 126px; text-align: right; }
.checks { display: flex; height: 31px; align-items: center; background: #efefef; padding-left: 19px; font: bold 14px/18px "Liberation Sans", Arial, sans-serif; color: #000; }
.chk { display: flex; align-items: center; gap: 5px; width: 408px; }
.chk input { appearance: none; width: 14px; height: 14px; background: #fff; border: 1px solid #adadad; }
.chk-big input { width: 17px; height: 17px; border-color: #444; }
```
